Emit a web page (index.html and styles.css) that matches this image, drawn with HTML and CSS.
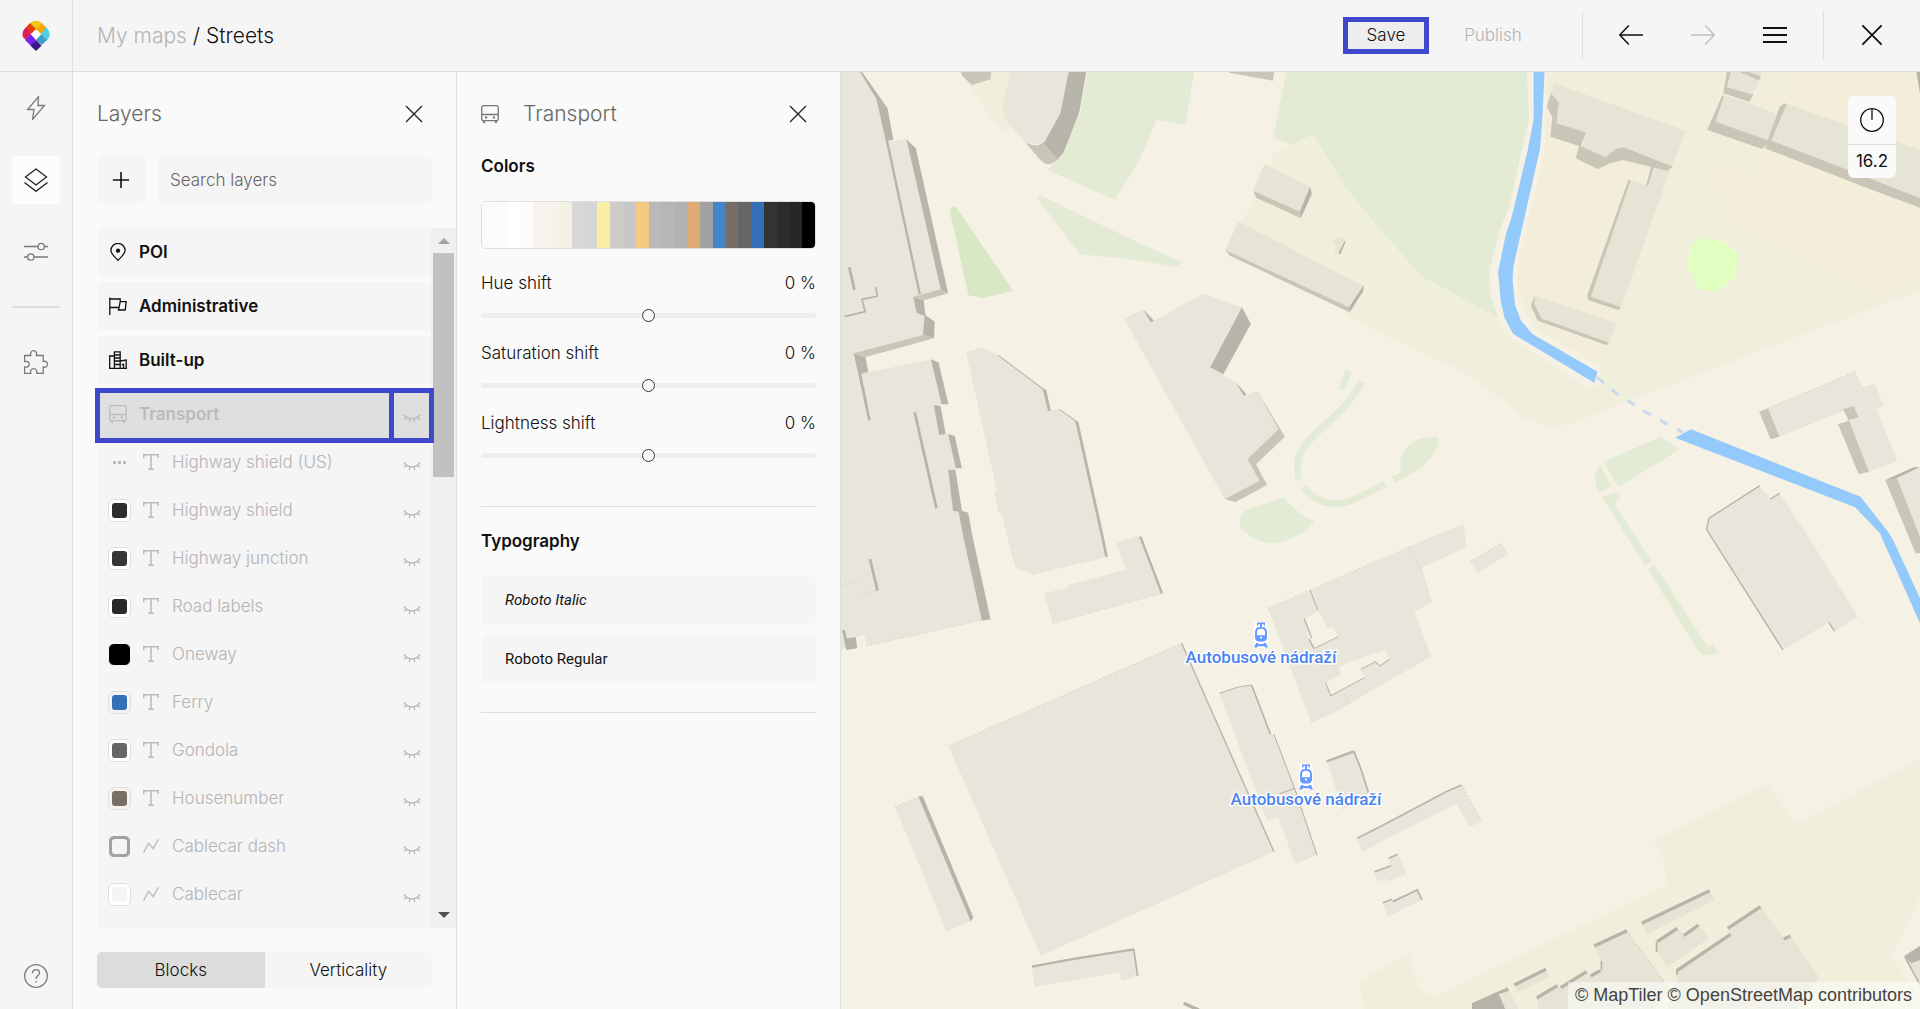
FILE: index.html
```html
<!DOCTYPE html>
<html lang="en">
<head>
<meta charset="utf-8">
<title>Streets – Map designer</title>
<link rel="stylesheet" href="styles.css">
</head>
<body>
<svg class="sprite" aria-hidden="true">
  <symbol id="i-close" viewBox="0 0 20 20"><path d="M2 2l16 16M18 2L2 18"/></symbol>
  <symbol id="i-plus" viewBox="0 0 20 20"><path d="M10 1v18M1 10h18"/></symbol>
  <symbol id="i-bolt" viewBox="0 0 24 24"><path d="M14.500 .8L3.500 13.500h6.500l-1.500 10L20.500 9.500h-6.500z"/></symbol>
  <symbol id="i-layers" viewBox="0 0 24 24"><path d="M12 1L1.500 9 12 17l10.500-8zM.5 14.500L12 23.300l11.500-8.800"/></symbol>
  <symbol id="i-sliders" viewBox="0 0 24 24"><path d="M0 6.500h14M20.500 6.500H24M0 17h3.500M10 17h14"/><circle cx="17.200" cy="6.500" r="3.200"/><circle cx="6.800" cy="17" r="3.200"/></symbol>
  <symbol id="i-puzzle" viewBox="0 0 24 24"><path d="M.6 5.500h6.200c-.8-2.800.8-4.800 2.800-4.800s3.600 2 2.800 4.800h6.800v6c2.400-.8 4.300.6 4.300 2.700s-1.900 3.600-4.300 2.800v6.300h-6.400c.6-2.600-.8-4.600-3.200-4.600s-3.600 2-2.800 4.600H.6v-6.300c2.700.6 4.700-.8 4.700-2.800s-2-3.300-4.700-2.700z"/></symbol>
  <symbol id="i-help" viewBox="0 0 24 24"><circle cx="12" cy="12" r="11.300"/><path d="M8.500 9.200c0-2.200 1.600-3.500 3.500-3.500s3.500 1.300 3.500 3.200c0 2.600-3.500 2.800-3.500 6M12 17v1.600"/></symbol>
  <symbol id="i-pin" viewBox="0 0 18 18"><path d="M9 17.300C6 14.200 1.900 10.900 1.900 7.500a7.100 7.100 0 0 1 14.200 0c0 3.400-4.100 6.700-7.100 9.800z"/><circle cx="9" cy="7.700" r="1.500" fill="currentColor"/></symbol>
  <symbol id="i-flag" viewBox="0 0 18 18"><path d="M.8.5V18M.8 2h10.400v2.300M.8 10.500h8.800M11.200 4.600h6l-1 8.400H9.500z"/></symbol>
  <symbol id="i-built" viewBox="0 0 18 18"><path d="M.7 17.300V5h4.700v12.300zM5.400 17.300V.8h5.800v16.500zM11.200 10l6-1v8.300h-6M6 4h5M6 7h5M6 10h5M6 13.500h5M14.500 17v-3.500h-1.800M0 17.300h18"/></symbol>
  <symbol id="i-bus" viewBox="0 0 18 18"><rect x=".7" y=".7" width="16.600" height="15" rx="1.800"/><path d="M.7 9.500h16.600M3 15.700v1.800M15 15.700v1.800M1.800 17.300h2.400M13.800 17.300h2.400"/><path d="M4 12.400h2.200M11.800 12.400H14" stroke-width="2"/></symbol>
  <symbol id="i-text" viewBox="0 0 16 16"><path d="M.7 4V.8h14.600V4M8 .8v14.400M5 15.300h6"/></symbol>
  <symbol id="i-line" viewBox="0 0 18 16"><path d="M.7 15.200L6.300 4.800l5.200 6L17.200.6"/></symbol>
  <symbol id="i-eye" viewBox="0 0 18 12"><path d="M.8 2.500c4.200 5.800 12.200 5.800 16.400 0M3.800 5L1.200 7.600M7 6.800l-.6 3.400M11 6.800l.6 3.400M14.200 5l2.600 2.600"/></symbol>
  <symbol id="i-left" viewBox="0 0 24 24"><path d="M24 12H1M9.800 2.500L.8 12l9 9.500"/></symbol>
  <symbol id="i-right" viewBox="0 0 24 24"><path d="M0 12h23M14.200 2.500l9 9.500-9 9.500"/></symbol>
  <symbol id="i-menu" viewBox="0 0 24 24"><path d="M0 5h24M0 12h24M0 19h24" stroke-width="2"/></symbol>
  <symbol id="i-compass" viewBox="0 0 24 24"><circle cx="12" cy="12" r="11.300"/><path d="M12 1v11"/></symbol>
  <symbol id="i-tram" viewBox="0 0 14 26">
    <g stroke="#fff" stroke-width="5" stroke-linejoin="round"><path d="M3 .6h8v2.600H3z"/><rect x="1" y="5" width="12" height="14" rx="5"/><path d="M2 21.500h10l2 4H0z"/></g>
    <g fill="#6699ff" stroke="none"><path fill="#fff" d="M1 5h12v18H1z"/><path d="M3 .5h8v3H9.500V2H8v3.500H6V2H4.500v1.500H3z"/><path fill-rule="evenodd" d="M3.500 5.300h7c1.500 1 2.500 3 2.500 5v5c0 2.500-1.500 4.200-4 4.200H5c-2.500 0-4-1.700-4-4.200v-5c0-2 1-4 2.500-5zM3 9.600v3.600h8V9.600C10.600 8 9.700 7 8.600 7H5.400C4.300 7 3.400 8 3 9.600zM7 14.500a1 1 0 1 0 .01 0z"/><path fill-rule="evenodd" d="M2 21h2l.5 1h5l.5-1h2l2 4.500h-3l-.6-1.200H3.600L3 25.500H0z"/></g>
  </symbol>
</svg>

<div class="app">
  <header class="topbar">
    <a class="logo" href="#" aria-label="Home">
      <svg width="28" height="32" viewBox="0 0 28 32">
        <clipPath id="drop"><path d="M14 1c3.500 0 5.500 1.500 8.500 4.500C26 9 27.500 11 27.500 14.500c0 3-1.300 4.800-3.500 7L14 31 4 21.500C1.800 19.300.5 17.500.5 14.500.5 11 2 9 5.500 5.500 8.500 2.500 10.500 1 14 1z"/></clipPath>
        <g clip-path="url(#drop)">
          <path fill="#f3c41c" d="M14-3l7 7-7 7-8-6z"/><path fill="#f3c41c" d="M14-3L6 5l3 2 5 3 6-6z"/>
          <path fill="#f5a800" d="M20 3l5 5-6 6-5-5z"/><path fill="#4fcfe0" d="M24 7l7 7-6 7-6-7z"/>
          <path fill="#e83e0e" d="M8 3l6 6-5 5-6-6z"/><path fill="#df1a5c" d="M4 7l5 7-5 6-7-6z"/>
          <path fill="#7a22ee" d="M9 14l5 6-5 6-6-6z"/><path fill="#3a9fc6" d="M19 14l6 6-5 5-6-5z"/>
          <path fill="#3b1a87" d="M14 20l6 6-6 6-6-6z"/><path fill="#fff" d="M14 9.500l5 5-5 5-5-5z"/>
        </g>
      </svg>
    </a>
    <nav class="crumbs" aria-label="Breadcrumb"><a href="#">My maps</a> / <span>Streets</span></nav>
    <div class="actions">
      <button class="save">Save</button>
      <button class="publish" disabled>Publish</button>
      <span class="vline"></span>
      <button class="tool" aria-label="Undo"><svg class="icon"><use href="#i-left"/></svg></button>
      <button class="tool" aria-label="Redo" disabled><svg class="icon"><use href="#i-right"/></svg></button>
      <button class="tool" aria-label="Menu"><svg class="icon"><use href="#i-menu"/></svg></button>
      <span class="vline"></span>
      <button class="tool quit" aria-label="Close"><svg class="icon"><use href="#i-close"/></svg></button>
    </div>
  </header>

  <nav class="rail" aria-label="Tools">
    <button aria-label="Quick styles"><svg class="icon"><use href="#i-bolt"/></svg></button>
    <button class="active" aria-label="Layers"><svg class="icon"><use href="#i-layers"/></svg></button>
    <button aria-label="Settings"><svg class="icon"><use href="#i-sliders"/></svg></button>
    <hr>
    <button aria-label="Plugins"><svg class="icon"><use href="#i-puzzle"/></svg></button>
    <button class="help" aria-label="Help"><svg class="icon"><use href="#i-help"/></svg></button>
  </nav>

  <section class="panel layers">
    <div class="head"><h1>Layers</h1><button aria-label="Close layers"><svg class="x"><use href="#i-close"/></svg></button></div>
    <div class="search">
      <button aria-label="Add layer"><svg class="plus"><use href="#i-plus"/></svg></button>
      <input type="text" placeholder="Search layers" aria-label="Search layers">
    </div>
    <div class="scroll">
      <div class="list">
        <button class="group"><svg><use href="#i-pin"/></svg>POI</button>
        <button class="group"><svg><use href="#i-flag"/></svg>Administrative</button>
        <button class="group"><svg><use href="#i-built"/></svg>Built-up</button>
        <div class="current">
          <button class="group"><svg><use href="#i-bus"/></svg>Transport</button>
          <button class="eye" aria-label="Show Transport"><svg><use href="#i-eye"/></svg></button>
        </div>
        <ul>
          <li><span class="dots"></span><svg class="kind"><use href="#i-text"/></svg>Highway shield (US)<button class="eye" aria-label="Show"><svg><use href="#i-eye"/></svg></button></li>
          <li><span class="swatch dark1"></span><svg class="kind"><use href="#i-text"/></svg>Highway shield<button class="eye" aria-label="Show"><svg><use href="#i-eye"/></svg></button></li>
          <li><span class="swatch dark2"></span><svg class="kind"><use href="#i-text"/></svg>Highway junction<button class="eye" aria-label="Show"><svg><use href="#i-eye"/></svg></button></li>
          <li><span class="swatch dark3"></span><svg class="kind"><use href="#i-text"/></svg>Road labels<button class="eye" aria-label="Show"><svg><use href="#i-eye"/></svg></button></li>
          <li><span class="swatch black"></span><svg class="kind"><use href="#i-text"/></svg>Oneway<button class="eye" aria-label="Show"><svg><use href="#i-eye"/></svg></button></li>
          <li><span class="swatch blue"></span><svg class="kind"><use href="#i-text"/></svg>Ferry<button class="eye" aria-label="Show"><svg><use href="#i-eye"/></svg></button></li>
          <li><span class="swatch grey"></span><svg class="kind"><use href="#i-text"/></svg>Gondola<button class="eye" aria-label="Show"><svg><use href="#i-eye"/></svg></button></li>
          <li><span class="swatch brown"></span><svg class="kind"><use href="#i-text"/></svg>Housenumber<button class="eye" aria-label="Show"><svg><use href="#i-eye"/></svg></button></li>
          <li><span class="swatch ring"></span><svg class="kind"><use href="#i-line"/></svg>Cablecar dash<button class="eye" aria-label="Show"><svg><use href="#i-eye"/></svg></button></li>
          <li><span class="swatch pale"></span><svg class="kind"><use href="#i-line"/></svg>Cablecar<button class="eye" aria-label="Show"><svg><use href="#i-eye"/></svg></button></li>
        </ul>
      </div>
      <div class="bar" aria-hidden="true"><i class="up"></i><i class="thumb"></i><i class="down"></i></div>
    </div>
    <div class="tabs"><button class="on">Blocks</button><button>Verticality</button></div>
  </section>

  <section class="panel props">
    <div class="head"><svg class="bus"><use href="#i-bus"/></svg><h2>Transport</h2><button aria-label="Close properties"><svg class="x"><use href="#i-close"/></svg></button></div>
    <h3>Colors</h3>
    <div class="palette">
      <i style="background:#fafafa"></i><i style="background:#fbfbfb"></i><i style="background:#ffffff"></i><i style="background:#fdfcfa"></i><i style="background:#faf2ec"></i><i style="background:#f6f3ec"></i><i style="background:#f3f0e4"></i><i style="background:#d8d8d8"></i><i style="background:#d5d5d5"></i><i style="background:#faeda5"></i><i style="background:#cdccc7"></i><i style="background:#c8c8c8"></i><i style="background:#f6c981"></i><i style="background:#b9b9b9"></i><i style="background:#b6b6b6"></i><i style="background:#b2b2b2"></i><i style="background:#dfab74"></i><i style="background:#a2a2a2"></i><i style="background:#4484c8"></i><i style="background:#786e64"></i><i style="background:#666666"></i><i style="background:#3470b8"></i><i style="background:#333333"></i><i style="background:#2c2c2c"></i><i style="background:#272727"></i><i style="background:#000000"></i>
    </div>
    <div class="shift"><label for="hue">Hue shift</label><output for="hue">0 %</output><input id="hue" type="range" min="-100" max="100" value="0"></div>
    <div class="shift"><label for="sat">Saturation shift</label><output for="sat">0 %</output><input id="sat" type="range" min="-100" max="100" value="0"></div>
    <div class="shift"><label for="light">Lightness shift</label><output for="light">0 %</output><input id="light" type="range" min="-100" max="100" value="0"></div>
    <hr>
    <h3 class="typo">Typography</h3>
    <button class="font italic">Roboto Italic</button>
    <button class="font">Roboto Regular</button>
    <hr>
  </section>

  <main class="map">
    <svg class="canvas" viewBox="0 0 1079 937" preserveAspectRatio="xMinYMin slice">
      <g transform="translate(-1 -2) scale(.34439 .33333)">
        <!-- land cover -->
        <g class="meadow">
          <path d="M345 0H500L490 180H475L430 130z"/>
          <path d="M1375 193L1260 250 1245 300 1160 470 1480 740 1568 790 1788 893 1868 945 1988 1045Q2050 1080 2128 1060L2268 1000 2438 935 3008 710 3136 665V0H1375z"/>
          <path d="M3136 2068L2773 2263 2696 2142 2361 2315Q2405 2370 2398 2445L1733 2778Q1700 2780 1678 2740L1653 2647 1508 2735 1525 2820H3136V2790L3055 2660 3136 2480z"/>
        </g>
        <g class="park">
          <path d="M718 0H1030L1003 165 920 150 865 280 797 390 603 300 640 260 700 120z"/>
          <path d="M582 376L573 386 697 553 860 570 977 590 995 578 860 515z"/>
          <path d="M1297 0L1258 205 1313 223 1375 193 1470 355 1568 478 1698 628H1708L1853 710 1911 742 1886 670V600L1913 490 1943 410 2000 150 1995 0z"/>
          <path d="M1467 898L1487 910 1465 960Q1455 967 1448 955z"/>
          <path d="M1162 1340Q1165 1325 1200 1312L1290 1282Q1320 1325 1378 1355 1340 1395 1310 1405 1260 1435 1200 1405L1162 1375z"/>
          <path d="M1603 1222L1630 1205Q1615 1150 1665 1115 1700 1098 1738 1102 1740 1150 1685 1195L1613 1238z"/>
          <path d="M2218 1175L2383 1100 2438 1138 2261 1252z"/>
          <path d="M2208 1185L2240 1250 2203 1267Q2180 1215 2208 1185z"/>
          <path d="M2213 1280L2258 1265 2268 1280 2248 1300 2357 1475 2338 1487z"/>
          <path d="M2346 1498L2365 1485 2518 1728 2533 1723 2551 1748Q2510 1765 2490 1740z"/>
        </g>
        <path class="lane" d="M1515 935C1460 1050 1330 1100 1328 1185Q1328 1210 1333 1228M1345 1250C1390 1310 1450 1312 1500 1285L1583 1242"/>
        <path fill="#d9e8c4" d="M318 418L335 408 503 662 415 684 373 676z"/>
        <path fill="#f3eed9" d="M2040 70L2046 235 1968 590V660L1993 730 2028 780 2208 888 2258 720 2408 300 2168 100zM2743 0L2733 75H2678L2668 100 2718 150 2678 240 2648 312 2493 262 2573 460 2668 510 3008 690 3136 640V0z"/>
        <path fill="#f5f1e4" d="M1995 0L2002 150 1943 410 1913 490 1886 600 1890 680 1911 745 1930 790 2173 955 2213 940 2208 888 2028 783 1985 715 1968 650V590L2048 235 2052 0z"/>
        <path fill="#e0ffc0" d="M2491 507L2558 510 2608 550 2601 620 2551 663 2495 660 2460 585 2473 530z"/>
        <!-- water -->
        <path class="water" d="M2014 0V150L1998 235 1952 435 1933 495 1911 605 1918 690 1930 745 1955 792 2190 938 2200 905 2011 793 1978 753 1960 705 1953 630 1955 590 2033 235 2040 130 2046 0z"/>
        <path class="water" d="M2425 1103L2471 1078 2963 1280 3043 1385 3058 1410 3136 1585V1660L3028 1410 3020 1390 2948 1312z"/>
        <path class="culvert" d="M2198 922L2248 965 2338 1025 2398 1060 2448 1087"/>

        <!-- building roofs -->
        <g class="roof">
          <path d="M0 0H55L108 88 145 215 195 208 297 662 213 680 222 728 245 738 243 795 40 850 62 912 265 868 298 1003 272 1005 288 1094 314 1092 337 1197 314 1199 328 1322 344 1325 360 1410 412 1650 78 1728 70 1695 48 1702 0 1745z"/>
          <path d="M366 845L415 833 460 856 590 957 610 1022 637 1018 685 1052 775 1458 560 1512 510 1495 488 1410 470 1330 460 1328 448 1265 455 1260z"/>
          <path d="M803 1420L870 1395 935 1570 617 1660 593 1570 660 1555 662 1545 830 1500z"/>
          <path d="M495 0H665L640 130 600 205Q585 232 540 220L480 150 473 110z"/>
          <path d="M825 746L880 718 912 752 1055 671 1167 712 1075 890 1150 938 1175 975 1212 963 1273 1078 1183 1167 1218 1235 1117 1287z"/>
          <path d="M2693 1015L2948 905 2971 955 3005 943 3031 1007 3010 1018 3070 1172 2983 1207 2923 1050 2943 1010 2728 1100z"/>
          <path d="M2523 1342L2671 1247 2701 1287 2728 1270 2818 1410 2956 1640 2890 1683 2871 1657 2738 1740 2516 1378z"/>
          <path d="M3068 1225L3136 1195V1400z"/>
          <path d="M315 2028L992 1720 1260 2345 583 2657z"/>
          <path d="M160 2210L235 2178 383 2550 310 2585z"/>
          <path d="M557 2690L670 2668 853 2638 865 2718 818 2732 812 2707 565 2750z"/>
          <path d="M1102 1870L1195 1845 1250 1993H1260L1320 2155 1385 2355 1322 2382 1272 2240 1240 2252z"/>
          <path fill-rule="evenodd" d="M1243 1615L1370 1560 1650 1430 1810 1362 1820 1430 1690 1493 1718 1595 1668 1625 1717 1760 1568 1847 1440 1925 1368 1958zM1350 1645L1390 1622 1415 1675 1432 1672 1447 1700 1378 1735 1362 1707zM1410 1840L1455 1810 1450 1790 1497 1767 1523 1823 1425 1877zM1500 1768L1583 1740 1595 1768 1568 1788 1555 1775 1512 1798z"/>
          <path d="M1830 1475L1920 1418 1940 1452 1853 1508z"/>
          <path d="M1413 2072L1492 2042 1535 2170 1460 2220z"/>
          <path d="M1502 2305L1568 2270 1805 2145 1863 2252 1828 2272 1790 2202 1568 2317 1518 2347z"/>
          <path d="M1593 2365L1620 2353 1645 2413 1590 2435 1585 2425 1560 2435 1552 2405 1600 2387z"/>
          <path d="M1576 2498L1676 2460 1690 2490 1590 2540z"/>
        </g>
        <g class="roof warm">
          <path d="M1232 282L1365 350 1335 430 1200 362z"/>
          <path d="M1157 455L1520 648 1478 715 1118 540z"/>
          <path d="M1447 500L1467 510 1450 553 1435 545 1440 528 1430 518z"/>
          <path d="M2073 40L2456 182 2416 292 2280 232 2248 240 2223 265 2158 230 2166 185 2078 160 2085 100 2063 70z"/>
          <path d="M2363 288L2410 300 2268 712 2173 680 2290 328 2343 345z"/>
          <path d="M2018 677L2255 760 2233 820 2028 745 2008 700z"/>
          <path d="M2583 0H2680L2648 78 2571 50z"/>
          <path d="M2563 72L2718 130 2698 212 2528 160z"/>
          <path d="M2743 100L3136 240V392L2693 212z"/>
          <path d="M2328 2560L2525 2462 2541 2490 2343 2592z"/>
          <path d="M2371 2615L2431 2575 2453 2595 2493 2565 2523 2605 2403 2690 2371 2645z"/>
          <path d="M2190 2628L2285 2582 2408 2755 2368 2820H2028L2023 2782 2083 2747 2093 2753 2168 2705 2180 2718 2208 2700 2211 2670z"/>
          <path d="M1958 2745L2050 2698 2060 2720 1968 2767z"/>
          <path d="M1835 2800L1938 2752 1972 2820H1835z"/>
          <path d="M2433 2700L2586 2593 2578 2575 2673 2510 2740 2605 2760 2598 2843 2720 2778 2820H2403L2428 2740z"/>
          <path d="M3090 2658L3136 2628V2740z"/>
        </g>
        <!-- shaded walls -->
        <g class="wall">
          <path d="M55 0H60L138 115 155 210 133 213 106 88z"/>
          <path d="M133 213H140L235 672H228z"/>
          <path d="M193 208L220 235 314 670 293 660z"/>
          <path d="M213 680L243 690 248 735 275 755 273 805 241 795 245 738 222 728z"/>
          <path d="M40 850L74 862 82 905 62 912 89 1050 82 1052z"/>
          <path d="M264 868L286 877 315 1003H295z"/>
          <path d="M272 1005L292 1008 307 1092 288 1095z"/>
          <path d="M314 1092L333 1098 354 1195H336z"/>
          <path d="M314 1199H335L354 1322 372 1328 387 1410 437 1648 412 1652 360 1410 344 1325 328 1322z"/>
          <path d="M588 955L599 960 612 1022H604zM683 1052L692 1055 768 1410 778 1460H770L760 1410z"/>
          <path d="M6 1680H14L20 1705 46 1702 50 1735 18 1740z"/>
          <path d="M665 0H716L695 125 650 245Q620 290 595 280L540 220Q585 240 600 205L640 130z"/>
          <path d="M1167 712L1193 762 1113 913 1075 892zM880 718L912 752 902 757zM1150 938L1180 973 1173 978z"/>
          <path d="M228 2180L240 2178 387 2542 380 2555z"/>
          <path d="M1835 2800L1938 2752 1943 2762 1913 2772 1933 2820H1835zM3090 2658L3136 2628V2670L3110 2680z"/>
          <path d="M3125 0H3136V72z"/>
        </g>
        <g class="wall soft">
          <path d="M293 658L314 670 247 690 213 680z"/><path d="M241 795L273 805 72 862 40 850z"/>
          <path d="M350 0H440L437 28 383 45 355 18zM1130 0H1262L1257 32 1130 8z"/>
          <path d="M540 220L570 228 590 218 635 268 612 282Q590 282 580 268z"/>
          <path d="M1200 362L1335 425 1338 445 1208 383zM1118 540L1478 712 1480 727 1132 557z"/>
          <path d="M1212 963L1292 1100 1208 1183 1240 1245 1147 1297 1117 1287 1218 1233 1183 1167 1273 1078z"/>
          <path d="M2065 70L2087 98 2080 160 2166 187 2151 228 2223 262 2253 237 2276 232 2418 290 2403 302 2273 270 2236 280 2200 297 2136 265 2146 228 2063 200 2068 140 2052 108z"/>
          <path d="M2290 328L2295 333 2180 680 2268 712 2260 720 2173 690 2170 675zM2355 290H2363L2346 347 2341 345z"/>
          <path d="M2008 700L2018 677 2015 700 2036 745 2233 818 2226 826 2026 752 2006 708z"/>
          <path d="M2576 0H2588L2575 52 2653 75 2640 95 2565 70zM2598 0H2625L2675 20 2668 30z"/>
          <path d="M2560 80L2567 78 2542 155 2698 212 2678 237 2518 180zM2743 100L2748 104 2704 212 2978 320 3136 385V413L2973 350 2686 235 2728 110z"/>
          <path d="M2669 1025L2695 1015 2728 1100 2702 1108zM2913 1018L2943 1008 2958 1042 2928 1050zM2898 1062L2930 1052 2988 1205 2958 1213z"/>
          <path d="M3035 1230L3068 1222 3136 1400V1450H3123z"/>
        </g>
        <g class="wall"><path d="M1365 350L1370 372 1338 445 1335 425zM1520 646V662L1480 727 1478 712zM3035 1230L3118 1192H3136L3068 1225zM1467 510V518L1452 555 1448 548z"/></g>
        <g class="edge">
          <path stroke-width="8" d="M217 1027L280 1315M27 592L42 660M87 1467L109 1562"/>
          <path d="M103 650L109 678 64 688 73 725 13 740"/>
          <path stroke-width="7" d="M872 1400L935 1570M670 2668L557 2690M670 2668L853 2638M1413 2074L1492 2044"/>
          <path d="M853 2638L864 2718M1195 1845L1250 1993M1502 2305L1568 2270 1760 2165 1805 2145M1492 2044L1512 2095 1535 2170M1593 2365L1620 2353M1552 2405L1600 2387"/>
          <path stroke-width="3" d="M460 856L590 957M637 1018L688 1055M1260 1993L1320 2155 1385 2355M1102 1870L1155 1852 1195 1845M1275 2172L1320 2155M1378 1735L1447 1700M1512 1798L1555 1775 1568 1788 1595 1768M1410 1838L1425 1877 1523 1823M1365 1560L1388 1622"/>
          <path stroke-width="4" d="M992 1720L1260 2345M2671 1247L2523 1345 2516 1378 2738 1740M2701 1287L2728 1270M2871 1657L2888 1684M1348 1646L1370 1705M1362 1707L1376 1735"/>
          <path stroke-width="10" d="M2328 2560L2525 2462M2373 2615L2431 2575M2450 2597L2493 2565M2190 2628L2285 2582M2023 2784L2083 2747M2093 2753L2168 2705M2180 2718L2208 2702M1958 2745L2050 2698M2430 2702L2586 2593M2578 2575L2673 2510M2740 2607L2760 2598M998 2800L1042 2820"/>
          <path d="M2371 2615V2645M2430 2700V2715M1576 2498L1603 2488M1605 2495L1676 2460 1690 2490M2211 2672V2700M3092 2660L3136 2745"/>
          <path class="dotted" d="M78 1728L412 1650M560 1512L775 1460M617 1660L935 1570M315 2028L992 1720M160 2210L228 2180M1243 1615L1570 1467M3 1545L57 1532M66 1572L105 1562M1830 1475L1920 1418M1805 2145L1863 2252M2285 2582L2408 2755M2693 1015L2948 905M2971 955L3005 943M1650 1430L1690 1505M1460 1862L1480 1905M1435 1785L1448 1822"/>
        </g>
      </g>
      <g class="poi">
        <svg x="413" y="550" width="14" height="26" class="tram"><use href="#i-tram"/></svg>
        <text x="420" y="591">Autobusové nádraží</text>
        <svg x="458" y="692" width="14" height="26" class="tram"><use href="#i-tram"/></svg>
        <text x="465" y="733">Autobusové nádraží</text>
      </g>
    </svg>
    <div class="control"><button aria-label="Reset north"><svg class="icon"><use href="#i-compass"/></svg></button><span>16.2</span></div>
    <div class="credit"><a href="#">© MapTiler</a> <a href="#">© OpenStreetMap contributors</a></div>
  </main>
</div>
</body>
</html>
```
FILE: styles.css
```css
*, *::before, *::after { box-sizing: border-box; }
html, body { height: 100%; margin: 0; }
body { font: 300 17px/24px Inter, "Liberation Sans", sans-serif; color: #111; background: #f5f5f5; }
button, input { font: inherit; color: inherit; border: 0; padding: 0; margin: 0; background: none; }
button { cursor: pointer; }
a { color: inherit; text-decoration: none; }
h1, h2, h3, ul { margin: 0; padding: 0; }
svg { display: block; flex: none; fill: none; stroke: currentColor; stroke-width: 1.3; overflow: visible; }
.sprite { position: absolute; width: 0; height: 0; }
.icon { width: 24px; height: 24px; }

.app {
  display: grid; height: 100vh; min-height: 640px;
  grid-template: 72px minmax(0, 1fr) / 73px 384px 384px minmax(0, 1fr);
}

/* top bar */
.topbar { grid-column: 1 / -1; display: flex; align-items: center; border-bottom: 1px solid #dedede; background: #f5f5f5; }
.logo { width: 73px; height: 71px; display: grid; place-items: center; border-right: 1px solid #dedede; }
.logo svg { stroke: none; }
.crumbs { padding-left: 24px; font-size: 21px; }
.crumbs a { color: #b4b4b4; }
.actions { margin-left: auto; display: flex; align-items: center; padding: 0 36px 1px 0; }
.save { width: 86px; height: 37px; border: 5px solid #3f48cc; background: #eee; }
.publish { width: 100px; margin: 0 39px 0 14px; color: #b4b4b4; }
.vline { width: 1px; height: 48px; background: #dedede; }
.tool { width: 24px; height: 24px; margin-left: 48px; display: grid; place-items: center; }
.vline + .tool { margin-left: 36px; }
.tool + .vline { margin-left: 36px; }
.tool:disabled { color: #c0c0c0; }
.tool svg { stroke-width: 1.5; }

/* icon rail */
.rail { display: flex; flex-direction: column; align-items: center; gap: 24px; padding: 12px 12px 9px; border-right: 1px solid #dedede; color: #7a7a7a; background: #f5f5f5; }
.rail button { width: 48px; height: 48px; display: grid; place-items: center; border-radius: 5px; }
.rail .active { background: #fcfcfc; color: #222; }
.rail hr { width: 48px; height: 2px; margin: 6px 0; border: 0; background: #dedede; }
.rail .help { margin-top: auto; }

/* side panels */
.panel { display: flex; flex-direction: column; background: #fafafa; border-right: 1px solid #dedede; padding: 24px 24px 21px; min-height: 0; }
.head { display: flex; align-items: center; height: 36px; margin-bottom: 24px; }
.head h1, .head h2 { font-size: 21px; font-weight: 300; color: #666; flex: 1; }
.head button { width: 36px; height: 36px; display: grid; place-items: center; color: #222; }
.x { width: 20px; height: 20px; }
.plus { width: 18px; height: 18px; stroke-width: 1.8; }
.bus { width: 18px; height: 18px; margin-right: 24px; color: #777; }

.search { display: flex; gap: 12px; margin-bottom: 24px; }
.search button { width: 48px; height: 48px; display: grid; place-items: center; border-radius: 5px; background: #f5f5f5; }
.search input { flex: 1; min-width: 0; height: 48px; padding: 0 13px; border-radius: 5px; background: #f5f5f5; }
.search input::placeholder { color: #666; opacity: 1; }

.scroll { flex: 1; min-height: 0; display: flex; margin-right: -24px; overflow: clip; overflow-clip-margin: 4px; }
.list { flex: 1; min-width: 0; display: flex; flex-direction: column; gap: 6px; }
.group { display: flex; align-items: center; gap: 12px; flex: none; height: 48px; padding: 0 12px; border-radius: 5px 0 0 5px; background: #f5f5f5; font-weight: 600; }
.group svg { width: 18px; height: 18px; }
.current { position: relative; display: flex; background: #dfdfdf; color: #bbb; z-index: 1; }
.current .group { flex: 1; background: none; }
.current .group::after, .current .eye::after { content: ""; position: absolute; border: 5px solid #3f48cc; inset: -2px 37px -5px -2px; }
.current .eye::after { inset: -2px -3px -5px auto; width: 45px; }
.eye { width: 18px; height: 48px; margin: 0 10px 0 auto; display: grid; place-items: center; padding-top: 8px; color: #bbb; }
.eye svg { width: 18px; height: 12px; }
ul { list-style: none; flex: 1; margin-top: -6px; background: #f5f5f5; color: #b4b4b4; }
li { display: flex; align-items: center; height: 48px; padding-left: 12px; }
.kind { width: 16px; height: 16px; margin: 0 13px 0 12px; stroke-width: 1.5; color: #bbb; }
.swatch { width: 23px; height: 23px; margin: 0 0 0 -1px; border: 1px solid #dedede; border-radius: 6px; background: #fff; padding: 3px; }
.swatch::before { content: ""; display: block; width: 15px; height: 15px; border-radius: 3px; background: currentColor; }
.dark1 { color: #2e2e2e; } .dark2 { color: #353535; } .dark3 { color: #282828; }
.black { color: #000; background: #000; border-color: #f5f5f5; }
.blue { color: #3470b8; background: #f6f3f8; }
.grey { color: #666; }
.brown { color: #786e64; background: #faf2ec; }
.ring { color: #f5f5f5; background: #a2a2a2; border-color: #f5f5f5; }
.pale { color: #f5f5f5; }
.dots { width: 22px; height: 3px; padding: 0 3px 0 4px; background: linear-gradient(90deg, #bbb 3px, transparent 3px) 0 0 / 5px 3px repeat-x content-box content-box; }

.bar { width: 25px; display: flex; flex-direction: column; align-items: center; background: #f0f0f0; }
.bar .up, .bar .down { border: 6px solid transparent; width: 0; }
.bar .up { border-top: 0; border-bottom-color: #a3a3a3; margin: 10px 0 9px; }
.bar .down { border-bottom: 0; border-top-color: #505050; margin: auto 0 10px; }
.bar .thumb { width: 21px; height: 32%; background: #c1c1c1; }

.tabs { display: flex; margin-top: 24px; border-radius: 5px; overflow: hidden; background: #f5f5f5; }
.tabs button { flex: 1; height: 36px; }
.tabs .on { background: #dcdcdc; }

/* properties */
h3 { font-size: 17px; line-height: 24px; font-weight: 600; }
.props .head { margin-bottom: 22px; }
.palette { display: flex; flex: none; height: 48px; margin: 23px 0 22px; border: 1px solid #dedede; border-radius: 5px; overflow: hidden; }
.palette i { flex: 1; }
.shift { display: grid; grid-template-columns: 1fr auto; row-gap: 10px; margin-bottom: 15px; }
.shift input { grid-column: 1 / -1; appearance: none; width: 100%; height: 21px; }
.shift input::-webkit-slider-runnable-track { height: 5px; border-radius: 3px; background: #eee; }
.shift input::-webkit-slider-thumb { appearance: none; width: 13px; height: 13px; margin-top: -4px; border: 1px solid #333; border-radius: 50%; background: #fafafa; box-shadow: 0 0 0 1px #fafafa; }
.props hr { width: 100%; height: 1px; margin: 25px 0 22px; border: 0; background: #dedede; }
.typo { margin-bottom: 23px; }
.font { height: 48px; flex: none; padding: 0 24px; margin-bottom: 11px; border-radius: 5px; background: #f5f5f5; text-align: left; font: 400 15px/24px Roboto, sans-serif; }
.italic { font-style: italic; }
.font + hr { margin-top: 18px; }

/* map */
.map { position: relative; overflow: hidden; background: #f5f1e4; }
.canvas { width: 100%; height: 100%; stroke: none; }
.meadow { fill: #f0efdc; }
.park { fill: #e3ebd5; }
.lane { stroke: #e3ebd5; stroke-width: 20; }
.water { fill: #93cafb; }
.culvert { stroke: #c8d9ec; stroke-width: 9; stroke-dasharray: 26 30; }
.roof { fill: #e8e5da; }
.warm { fill: #e6e4d4; }
.wall { fill: #b7b4aa; }
.soft { fill: #c9c6b7; }
.edge { stroke: #b7b4aa; stroke-width: 5; }
.dotted { stroke: #d2cfc4; stroke-width: 3; stroke-dasharray: 4 8; }
.poi text { font: 500 17px Roboto, sans-serif; fill: #4a83f0; stroke: #fff; stroke-width: 3px; stroke-linejoin: round; paint-order: stroke; text-anchor: middle; }
.control { position: absolute; top: 24px; right: 24px; width: 48px; border-radius: 6px; background: #fafafa; text-align: center; overflow: hidden; }
.control button { width: 48px; height: 49px; display: grid; place-items: center; border-bottom: 1px solid #dedede; }
.control span { display: block; height: 33px; line-height: 33px; font-weight: 400; }
.credit { position: absolute; right: 0; bottom: 0; padding: 1px 8px 2px 7px; background: rgba(255, 255, 255, .5); font: 18px/24px "Liberation Sans", Arial, sans-serif; color: #444; }
```
